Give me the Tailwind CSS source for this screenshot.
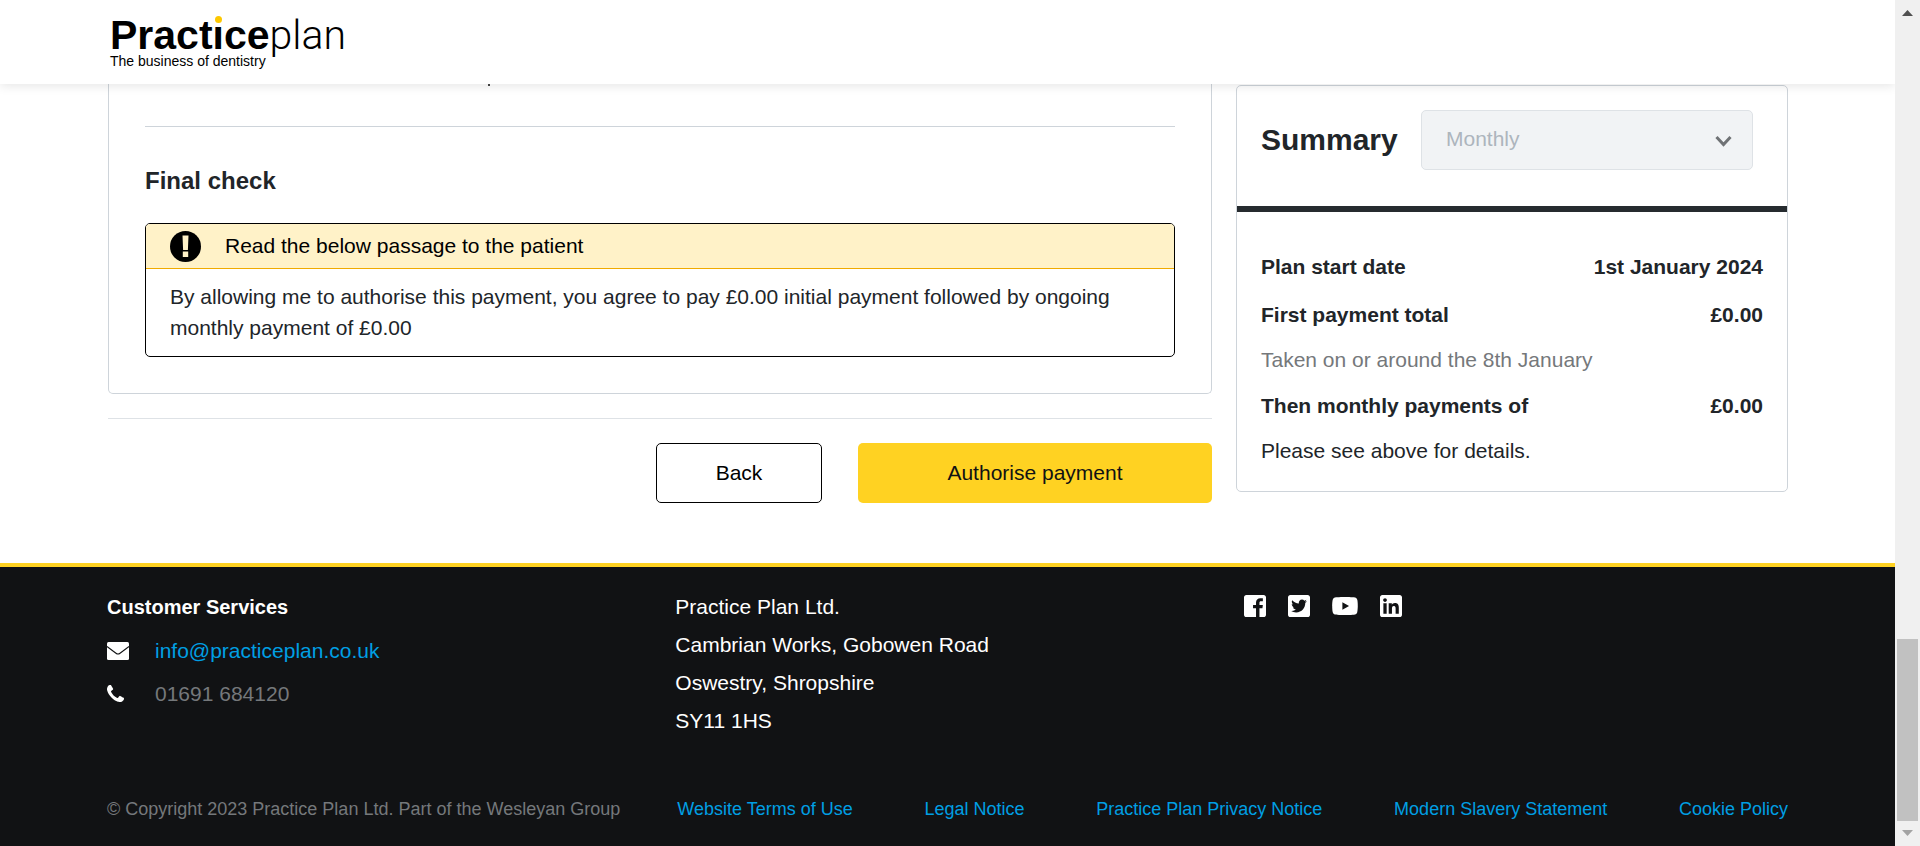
<!DOCTYPE html>
<html lang="en">
<head>
<meta charset="utf-8">
<meta name="viewport" content="width=device-width, initial-scale=1">
<title>Practice Plan</title>
<script src="https://cdn.jsdelivr.net/npm/@tailwindcss/browser@4"></script>
</head>
<body class="flex min-h-screen bg-white font-['Liberation_Sans',Arial,sans-serif] text-[21px] leading-[30px] text-[#212529]">
<div class="flex min-w-0 flex-1 flex-col">

  <header class="relative z-10 h-[84px] bg-white pl-[110px] pt-4 shadow-[0_2px_10px_rgba(0,0,0,0.10)]">
    <a href="#" class="block w-fit text-black">
      <span class="flex items-baseline leading-[38px]">
        <span class="text-[41px] font-bold">Pract<span class="relative inline-block">i<span class="absolute inset-x-0 -top-1 flex h-[14px] items-center justify-center bg-white"><span class="size-[7px] rounded-full bg-[#fdc800]"></span></span></span>ce</span><span class="font-[Roboto,sans-serif] text-[41px] font-light">plan</span>
      </span>
      <span class="block text-[14px] leading-[14px]">The business of dentistry</span>
    </a>
  </header>

  <main class="grid grid-cols-[2fr_1fr] items-start gap-6 pb-[60px] pl-[108px] pr-[107px]">
    <div>
      <section class="rounded-b-[5px] border-x border-b border-[#ced4da] px-9 pb-9">
        <div class="h-[42px] pl-[343px]"><div class="h-[2px] w-[2px] bg-[#444]"></div></div>
        <hr class="border-[#ced4da]">
        <h2 class="mt-[39px] text-[24px] font-bold leading-[30px]">Final check</h2>
        <div class="mt-[27px] overflow-hidden rounded-[5px] border border-black">
          <div class="flex h-[45px] items-center gap-6 border-b border-[#f0ab00] bg-[#fff2c8] pl-6 text-black">
            <svg class="size-[31px]" viewBox="0 0 31 31"><circle cx="15.5" cy="15.5" r="15.5"/><path d="M12.500 4.500h6l-.6 14.500h-4.800zM12.800 20.500h5.400v5.500h-5.400z" fill="#fff2c8"/></svg>
            <span>Read the below passage to the patient</span>
          </div>
          <p class="px-6 pb-[13px] pt-3 leading-[31px]">By allowing me to authorise this payment, you agree to pay £0.00 initial payment followed by ongoing monthly payment of £0.00</p>
        </div>
      </section>
      <div class="mt-6 flex justify-end gap-9 border-t border-[#dee2e6] pt-6 text-black">
        <button type="button" class="h-[60px] w-[166px] rounded-[5px] border border-black bg-white">Back</button>
        <button type="button" class="h-[60px] w-[354px] rounded-[5px] bg-[#ffd222] text-[#111214]">Authorise payment</button>
      </div>
    </div>

    <aside class="mt-px rounded-[5px] border border-[#ced4da]">
      <div class="flex items-center justify-between border-b-6 border-[#262b2f] pb-9 pl-6 pr-[34px] pt-6">
        <h2 class="text-[30px] font-bold leading-[36px]"><label for="frequency">Summary</label></h2>
        <div class="relative w-[332px]">
          <select id="frequency" disabled class="block h-[60px] w-full appearance-none rounded-[5px] border border-[#dee2e6] bg-[#f1f3f5] pb-0.5 pl-6 text-[#adb5bd] opacity-100"><option>Monthly</option></select>
          <svg class="pointer-events-none absolute right-[21px] top-[25px] h-[12px] w-[17px]" viewBox="0 0 17 12" fill="none" stroke="#6f7275" stroke-width="3"><path d="M1.500 2l7 7.500 7-7.500"/></svg>
        </div>
      </div>
      <dl class="px-6 pb-[25px] pt-10">
        <div class="flex justify-between font-bold"><dt>Plan start date</dt><dd>1st January 2024</dd></div>
        <div class="mt-[18px] flex justify-between font-bold"><dt>First payment total</dt><dd>£0.00</dd></div>
        <div class="mt-[15px] text-[#75787b]"><dt>Taken on or around the 8th January</dt></div>
        <div class="mt-[16px] flex justify-between font-bold"><dt>Then monthly payments of</dt><dd>£0.00</dd></div>
        <div class="mt-[15px]"><dt>Please see above for details.</dt></div>
      </dl>
    </aside>
  </main>

  <footer class="flex-1 border-t-4 border-[#ffd222] bg-[#111214] px-[107px] pt-[21px] text-white">
    <div class="grid grid-cols-3 gap-x-6">
      <div>
        <h3 class="text-[20px] font-bold leading-[38px]">Customer Services</h3>
        <ul class="mt-[3px] leading-[43px]">
          <li class="flex items-center">
            <span class="w-12"><svg class="h-[18px] w-[22px]" viewBox="0 0 22 18"><rect width="22" height="18" rx="1.500" fill="#fff"/><path d="M0 4.500l9 6.800q2 1.500 4 0l9-6.800" fill="none" stroke="#111214" stroke-width="1.100"/></svg></span>
            <a href="mailto:info@practiceplan.co.uk" class="text-[#009fe3]">info@practiceplan.co.uk</a>
          </li>
          <li class="flex items-center">
            <span class="w-12"><svg class="size-[17px]" viewBox="192 128 1408 1408" fill="#fff"><path d="M1600 1240q0 27-10 70.500t-21 68.500q-21 50-122 106-94 51-186 51-27 0-53-3.500t-57.500-12.500-47-14.500-55.500-20.500-49-18q-98-35-175-83-127-79-264-216t-216-264q-48-77-83-175-3-9-18-49t-20.500-55.500-14.500-47-12.500-57.500-3.500-53q0-92 51-186 56-101 106-122 25-11 68.500-21t70.500-10q14 0 21 3 18 6 53 76 11 19 30 54t35 63.500 31 53.500q3 4 17.500 25t21.500 35.500 7 28.500q0 20-28.500 50t-62 55-62 53-28.500 46q0 9 5 22.500t8.500 20.500 14 24 11.500 19q76 137 174 235t235 174q2 1 19 11.500t24 14 20.500 8.500 22.500 5q18 0 46-28.500t53-62 55-62 50-28.500q14 0 28.500 7t35.500 21.500 25 17.500q25 15 53.500 31t63.500 35 54 30q70 35 76 53 3 7 3 21z"/></svg></span>
            <span class="text-[#75787b]">01691 684120</span>
          </li>
        </ul>
      </div>
      <address class="not-italic leading-[38px]">Practice Plan Ltd.<br>Cambrian Works, Gobowen Road<br>Oswestry, Shropshire<br>SY11 1HS</address>
      <nav aria-label="Social media" class="flex h-[35px] items-center gap-[22px]">
        <a href="#" aria-label="Facebook"><svg class="size-[22px]" viewBox="0 32 448 448" fill="#fff"><path d="M448 80v352c0 26.500-21.500 48-48 48h-85.300V302.800h60.600l8.700-67.600h-69.300V192c0-19.600 5.400-32.900 33.500-32.900H384V98.700c-6.200-.8-27.400-2.700-52.200-2.700-51.600 0-87 31.500-87 89.400v49.900H184v67.600h60.900V480H48c-26.500 0-48-21.500-48-48V80c0-26.500 21.500-48 48-48h352c26.500 0 48 21.500 48 48z"/></svg></a>
        <a href="#" aria-label="Twitter"><svg class="size-[22px]" viewBox="0 32 448 448" fill="#fff"><path d="M400 32H48C21.500 32 0 53.500 0 80v352c0 26.500 21.500 48 48 48h352c26.500 0 48-21.500 48-48V80c0-26.500-21.500-48-48-48zm-48.900 158.800c.2 2.800.2 5.700.2 8.500 0 86.700-66 186.600-186.600 186.600-37.200 0-71.700-10.800-100.700-29.400 5.300.6 10.400.8 15.800.8 30.700 0 58.900-10.400 81.400-28-28.800-.6-53-19.500-61.300-45.500 10.100 1.500 19.200 1.500 29.600-1.200-30-6.100-52.500-32.500-52.500-64.400v-.8c8.700 4.900 18.900 7.900 29.600 8.300a65.447 65.447 0 0 1-29.200-54.600c0-12.200 3.200-23.400 8.900-33.100 32.300 39.800 80.800 65.800 135.200 68.600-9.300-44.500 24-80.600 64-80.600 18.900 0 35.900 7.900 47.900 20.700 14.800-2.800 29-8.300 41.600-15.800-4.900 15.200-15.200 28-28.800 36.100 13.200-1.400 26-5.100 37.800-10.200-8.900 13.100-20.100 24.700-32.900 34z"/></svg></a>
        <a href="#" aria-label="YouTube"><svg class="h-[18px] w-[26px]" viewBox="14 64 548 384" fill="#fff"><path d="M549.655 124.083c-6.281-23.650-24.787-42.276-48.284-48.597C458.781 64 288 64 288 64S117.220 64 74.629 75.486c-23.497 6.322-42.003 24.947-48.284 48.597-11.412 42.867-11.412 132.305-11.412 132.305s0 89.438 11.412 132.305c6.281 23.650 24.787 41.500 48.284 47.821C117.220 448 288 448 288 448s170.780 0 213.371-11.486c23.497-6.321 42.003-24.171 48.284-47.821 11.412-42.867 11.412-132.305 11.412-132.305s0-89.438-11.412-132.305zm-317.510 213.508V175.185l142.739 81.205-142.739 81.201z"/></svg></a>
        <a href="#" aria-label="LinkedIn"><svg class="size-[22px]" viewBox="0 32 448 448" fill="#fff" fill-rule="evenodd"><path d="M400 32H48C21.500 32 0 53.500 0 80v352c0 26.500 21.500 48 48 48h352c26.500 0 48-21.500 48-48V80c0-26.500-21.500-48-48-48zM135.400 416H69V202.200h66.500V416zm-33.200-243c-21.300 0-38.500-17.300-38.500-38.500S80.900 96 102.200 96c21.200 0 38.500 17.300 38.500 38.500 0 21.300-17.200 38.500-38.500 38.500zm282.100 243h-66.400V312c0-24.800-.5-56.700-34.500-56.700-34.600 0-39.900 27-39.900 54.900V416h-66.400V202.200h63.700v29.200h.9c8.900-16.800 30.600-34.500 62.200-34.500 66.500 0 78.900 43.800 78.900 100.900V416z"/></svg></a>
      </nav>
    </div>
    <div class="mt-[55px] grid grid-cols-3 gap-x-6 text-[18px] leading-[28px]">
      <p class="text-[#75787b]">© Copyright 2023 Practice Plan Ltd. Part of the Wesleyan Group</p>
      <nav aria-label="Legal" class="col-span-2 flex justify-between pl-0.5 text-[#009fe3]">
        <a href="#">Website Terms of Use</a>
        <a href="#">Legal Notice</a>
        <a href="#">Practice Plan Privacy Notice</a>
        <a href="#">Modern Slavery Statement</a>
        <a href="#">Cookie Policy</a>
      </nav>
    </div>
  </footer>
</div>

<!-- Scroll track -->
<div aria-hidden="true" class="relative z-20 flex w-[25px] shrink-0 flex-col items-center bg-[#f0f0f0] py-[10px]">
  <svg class="h-[6px] w-[11px]" viewBox="0 0 11 6"><path d="M0 6L5.500 0 11 6z" fill="#505050"/></svg>
  <div class="flex-1"></div>
  <div class="h-[182px] w-[21px] bg-[#c1c1c1]"></div>
  <svg class="mt-[9px] h-[6px] w-[11px]" viewBox="0 0 11 6"><path d="M0 0L5.500 6 11 0z" fill="#a3a3a3"/></svg>
</div>
</body>
</html>
